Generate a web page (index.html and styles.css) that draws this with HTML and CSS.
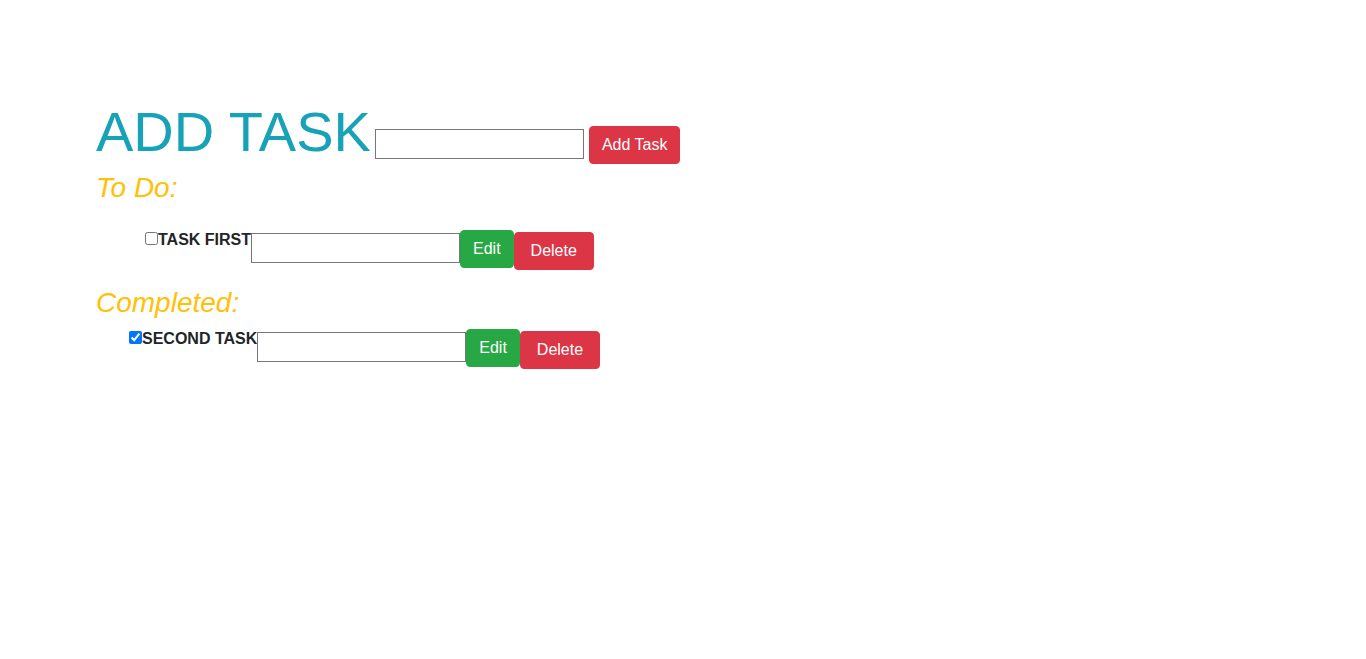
FILE: index.html
```html
<!DOCTYPE html>
<html lang="en">
<head>
<meta charset="utf-8">
<title>Todo</title>
<link rel="stylesheet" href="styles.css">
</head>
<body>
<main class="page">
  <div class="add-row">
    <h1 class="title">ADD TASK</h1>
    <input class="field field-add" type="text">
    <button class="btn btn-danger btn-add">Add Task</button>
  </div>

  <h3 class="section">To Do:</h3>
  <ul class="task-list todo-list">
    <li class="task">
      <input class="check" type="checkbox">
      <label class="task-label">TASK FIRST</label>
      <input class="field field-task" type="text">
      <button class="btn btn-success btn-edit">Edit</button>
      <button class="btn btn-danger btn-delete">Delete</button>
    </li>
  </ul>

  <h3 class="section section-done">Completed:</h3>
  <ul class="task-list done-list">
    <li class="task">
      <input class="check" type="checkbox" checked>
      <label class="task-label">SECOND TASK</label>
      <input class="field field-task" type="text">
      <button class="btn btn-success btn-edit">Edit</button>
      <button class="btn btn-danger btn-delete">Delete</button>
    </li>
  </ul>
</main>
</body>
</html>
```

FILE: styles.css
```css
* { box-sizing: border-box; }

html, body {
  margin: 0;
  padding: 0;
  background: #fff;
}

body {
  font-family: "Liberation Sans", Arial, sans-serif;
  font-size: 16px;
  line-height: 1.5;
  color: #212529;
}

.page {
  padding: 98px 0 0 96px;
}

.add-row {
  display: flex;
  align-items: flex-start;
}

.title {
  margin: 0 4px 0 0;
  font-size: 56px;
  font-weight: 400;
  line-height: 67px;
  color: #17a2b8;
}

.field {
  width: 209px;
  height: 30px;
  margin: 0;
  padding: 2px 3px;
  border: 1px solid #767676;
  border-radius: 0;
  background: #fff;
  font: inherit;
  line-height: 24px;
  color: #212529;
}

.field-add {
  margin: 31px 5px 0 0;
}

.btn {
  display: inline-block;
  margin: 0;
  padding: 6px 12px;
  border: 1px solid transparent;
  border-radius: 4px;
  font-family: inherit;
  font-size: 16px;
  line-height: 24px;
  color: #fff;
  cursor: pointer;
}

.btn-add {
  margin-top: 28px;
}

.btn-danger {
  background: #dc3545;
  border-color: #dc3545;
}

.btn-success {
  background: #28a745;
  border-color: #28a745;
}

.section {
  margin: 6px 0 0;
  font-size: 28px;
  font-weight: 400;
  font-style: italic;
  line-height: 34px;
  color: #ffc107;
}

.section-done {
  margin-top: 16px;
}

.task-list {
  list-style: none;
  margin: 0;
  padding: 0;
}

.todo-list {
  margin-top: 24px;
  padding-left: 49px;
}

.done-list {
  margin-top: 8px;
  padding-left: 33px;
}

.task {
  display: flex;
  align-items: flex-start;
}

.check {
  width: 13px;
  height: 13px;
  margin: 3px 0 0;
}

.task-label {
  font-weight: 700;
  line-height: 24px;
  margin-top: -1px;
}

.field-task {
  margin-top: 4px;
}

.btn-edit {
  margin-top: 1px;
}

.btn-delete {
  margin-top: 3px;
  padding: 6px 16px;
}
```
